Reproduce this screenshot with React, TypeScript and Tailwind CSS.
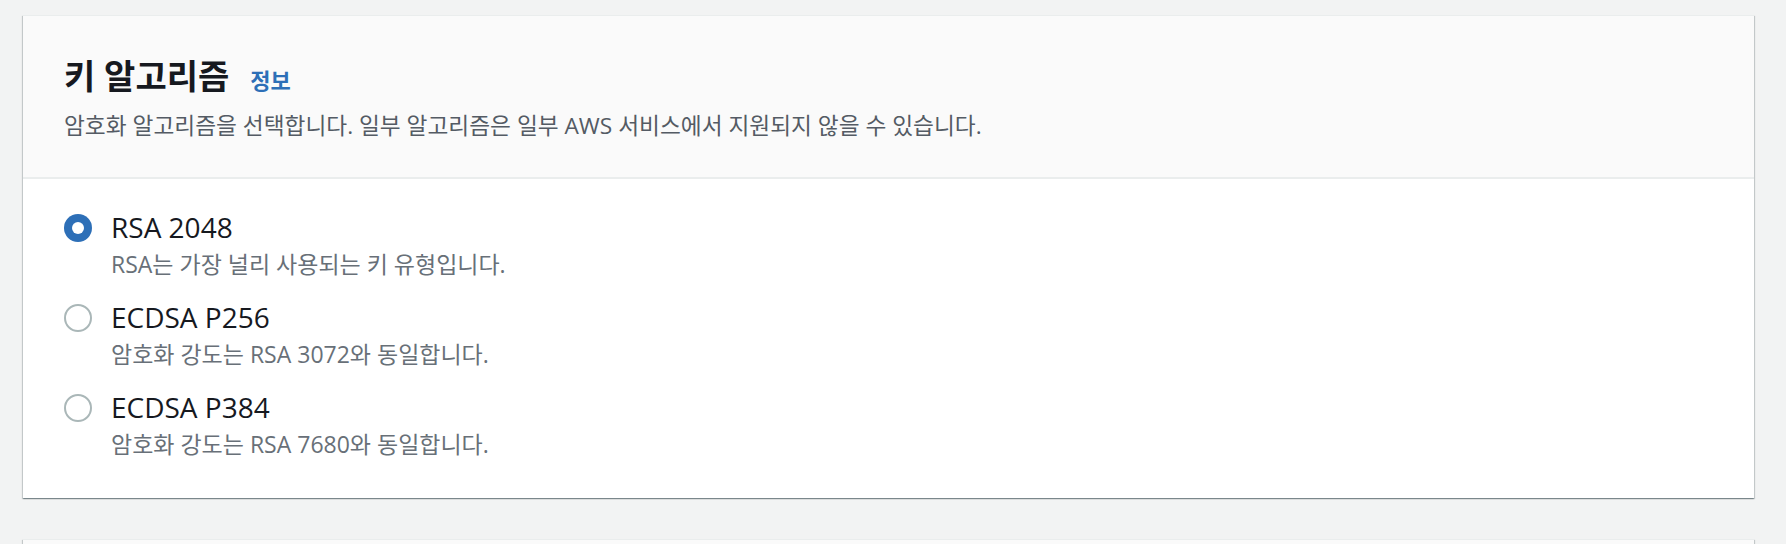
import React from "react";

type Opt = { label: string; desc: string; selected?: boolean };

const options: Opt[] = [
  { label: "RSA 2048", desc: "RSA는 가장 널리 사용되는 키 유형입니다.", selected: true },
  { label: "ECDSA P256", desc: "암호화 강도는 RSA 3072와 동일합니다." },
  { label: "ECDSA P384", desc: "암호화 강도는 RSA 7680와 동일합니다." },
];

function Radio({ selected }: { selected?: boolean }) {
  if (selected) {
    return (
      <span className="flex h-[28px] w-[28px] shrink-0 items-center justify-center rounded-full bg-[#2d6fb7]">
        <span className="h-[12px] w-[12px] rounded-full bg-white" />
      </span>
    );
  }
  return <span className="h-[28px] w-[28px] shrink-0 rounded-full border-2 border-[#aab7b8] bg-white" />;
}

export default function App() {
  return (
    <div className="h-[544px] w-full overflow-hidden bg-[#f2f3f3] pt-[15px] pl-[23px] pr-[32px] font-['Open_Sans','Noto_Sans_CJK_KR',sans-serif]">
      <div className="border-t border-[#eaeded] bg-white shadow-[0_1px_1px_0_rgba(0,28,36,0.3),1px_1px_1px_0_rgba(0,28,36,0.15),-1px_1px_1px_0_rgba(0,28,36,0.15)]">
        <div className="border-b-2 border-[#eaeded] bg-[#fafafa] px-[41px] pt-[40px] pb-[36px]">
          <div className="flex items-baseline">
            <h2 className="text-[34px] font-bold leading-[40px] text-[#16191f]">키 알고리즘</h2>
            <a className="ml-[21px] text-[22px] font-bold leading-[40px] text-[#2d6fb7]">정보</a>
          </div>
          <p className="mt-[11px] text-[22.7px] leading-[30px] text-[#545b64]">
            암호화 알고리즘을 선택합니다. 일부 알고리즘은 일부 AWS 서비스에서 지원되지 않을 수 있습니다.
          </p>
        </div>
        <div className="flex flex-col gap-[20px] px-[41px] pt-[30px] pb-[39px]">
          {options.map((o) => (
            <div key={o.label} className="flex flex-col">
              <div className="flex items-center gap-[19px]">
                <span className="mt-[2px] flex">
                  <Radio selected={o.selected} />
                </span>
                <span className="text-[28px] leading-[36px] text-[#16191f]">{o.label}</span>
              </div>
              <div className="mt-[4px] pl-[47px] text-[23px] leading-[30px] text-[#687078]">{o.desc}</div>
            </div>
          ))}
        </div>
      </div>
      <div className="mt-[41px] h-[10px] border-t border-[#eaeded] bg-[#fafafa] shadow-[0_1px_1px_0_rgba(0,28,36,0.3),1px_1px_1px_0_rgba(0,28,36,0.15),-1px_1px_1px_0_rgba(0,28,36,0.15)]" />
    </div>
  );
}
